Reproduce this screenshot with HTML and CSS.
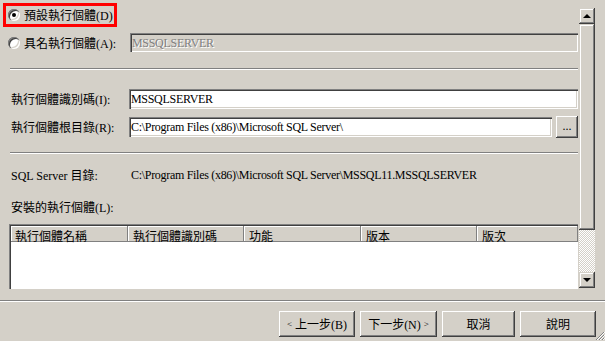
FILE: index.html
```html
<!DOCTYPE html>
<html lang="zh-Hant">

<head>
  <meta charset="UTF-8">
  <title>執行個體組態</title>
  <link rel="stylesheet" href="styles.css">
</head>

<body>
  <div class="pane">
    <div class="content">
      <div class="choice-default">
        <span class="radio checked"></span>
        <span>預設執行個體(D)</span>
      </div>

      <div class="row named">
        <span class="radio"></span>
        <span class="named-label">具名執行個體(A):</span>
        <div class="field disabled">MSSQLSERVER</div>
      </div>

      <div class="sep"></div>

      <div class="row id-row">
        <span class="label">執行個體識別碼(I):</span>
        <div class="field">MSSQLSERVER</div>
      </div>

      <div class="row root-row">
        <span class="label">執行個體根目錄(R):</span>
        <div class="field">C:\Program Files (x86)\Microsoft SQL Server\</div>
        <div class="btn browse">...</div>
      </div>

      <div class="sep sep-2"></div>

      <div class="row dir-row">
        <span class="label dir-label">SQL Server 目錄:</span>
        <span class="latin">C:\Program Files (x86)\Microsoft SQL Server\MSSQL11.MSSQLSERVER</span>
      </div>

      <div class="row installed">安裝的執行個體(L):</div>

      <div class="list">
        <div class="list-head">
          <div class="col c1">執行個體名稱</div>
          <div class="col c2">執行個體識別碼</div>
          <div class="col c3">功能</div>
          <div class="col c4">版本</div>
          <div class="col c5">版次</div>
        </div>
        <div class="list-body"></div>
      </div>
    </div>

    <div class="scrollbar">
      <div class="sb-btn"><span class="arrow up"></span></div>
      <div class="sb-thumb"></div>
      <div class="sb-track"></div>
      <div class="sb-btn"><span class="arrow down"></span></div>
    </div>
  </div>

  <div class="sep full"></div>

  <div class="buttons">
    <div class="btn nav b1"><span class="small">&lt;</span>&nbsp;上一步(B)</div>
    <div class="btn nav b2">下一步(N)&nbsp;<span class="small">&gt;</span></div>
    <div class="btn nav b3">取消</div>
    <div class="btn nav b4">說明</div>
  </div>

  <svg class="grip" width="10" height="10" viewBox="0 0 10 10">
    <path d="M9 1 L1 9 M9 4 L4 9 M9 7 L7 9" stroke="#808080" stroke-width="1" />
    <path d="M10 1 L2 9 M10 4 L5 9 M10 7 L8 9" stroke="#fff" stroke-width="1" />
  </svg>
</body>

</html>
```

FILE: styles.css
```css
body {
  margin: 0;
  width: 605px;
  height: 341px;
  overflow: hidden;
  position: relative;
  background: #d4d0c8;
  font-family: "Liberation Serif", "Noto Sans CJK TC", serif;
  font-size: 12px;
  color: #000;
}

.pane {
  display: flex;
  height: 289px;
  padding-right: 10px;
  overflow: hidden;
}

.content {
  flex: 1;
  padding: 3px 1px 0 0;
  display: flex;
  flex-direction: column;
}

.choice-default {
  box-sizing: border-box;
  width: 114px;
  height: 24px;
  margin-left: 3px;
  border: 3px solid #f00;
  padding-left: 2px;
  display: flex;
  align-items: center;
  gap: 4px;
}

.radio {
  position: relative;
  flex: none;
  width: 12px;
  height: 12px;
  border-radius: 50%;
  background: #fff;
  box-shadow: inset 1px 1px 0 #808080, inset 2px 2px 0 #404040,
    inset -1px -1px 0 #fff, inset -2px -2px 0 #d4d0c8;
}

.radio.checked::after {
  content: "";
  position: absolute;
  left: 4px;
  top: 4px;
  width: 4px;
  height: 4px;
  border-radius: 50%;
  background: #000;
}

.row {
  display: flex;
  align-items: center;
}

.named {
  margin-top: 6px;
  height: 19px;
  padding-left: 8px;
  gap: 4px;
}

.named-label {
  width: 102px;
}

.field {
  flex: 1;
  box-sizing: border-box;
  height: 20px;
  padding: 3px 2px 0;
  background: #fff;
  white-space: nowrap;
  overflow: hidden;
  letter-spacing: -0.3px;
  box-shadow: inset 1px 1px 0 #808080, inset 2px 2px 0 #404040,
    inset -1px -1px 0 #fff, inset -2px -2px 0 #d4d0c8;
}

.latin {
  letter-spacing: -0.3px;
  white-space: nowrap;
}

.named .field {
  height: 19px;
}

.field.disabled {
  background: #d4d0c8;
  color: #808080;
  text-shadow: 1px 1px 0 #fff;
}

.sep {
  height: 0;
  margin: 16px 0 0 10px;
  border-top: 1px solid #808080;
  border-bottom: 1px solid #fff;
}

.sep-2 {
  margin-top: 14px;
}

.label {
  width: 118px;
  flex: none;
  padding-left: 11px;
}

.id-row {
  margin-top: 19px;
  height: 20px;
}

.root-row {
  margin-top: 7px;
  height: 22px;
}

.btn {
  box-sizing: border-box;
  display: flex;
  align-items: center;
  justify-content: center;
  background: #d4d0c8;
  box-shadow: inset -1px -1px 0 #404040, inset 1px 1px 0 #fff,
    inset -2px -2px 0 #808080, inset 2px 2px 0 #d4d0c8;
}

.browse {
  width: 22px;
  height: 22px;
  flex: none;
  margin-left: 4px;
  padding-bottom: 2px;
}

.dir-row {
  margin-top: 14px;
  height: 14px;
}

.dir-label {
  width: 120px;
}

.installed {
  margin-top: 18px;
  height: 14px;
  padding-left: 11px;
}

.list {
  margin: 10px 0 0 9px;
  flex: none;
  height: 80px;
  background: #fff;
  padding: 2px 0 0 2px;
  box-shadow: inset 1px 1px 0 #808080, inset 2px 2px 0 #404040;
}

.list-head {
  display: flex;
  height: 16px;
}

.col {
  box-sizing: border-box;
  height: 16px;
  padding: 1px 0 0 5px;
  background: #d4d0c8;
  white-space: nowrap;
  box-shadow: inset -1px -1px 0 #808080, inset 1px 1px 0 #fff;
}

.c1 { width: 117px; padding-left: 4px; }
.c2 { width: 116px; }
.c3 { width: 117px; }
.c4 { width: 116px; }
.c5 { flex: 1; }

.scrollbar {
  width: 16px;
  margin-top: 8px;
  display: flex;
  flex-direction: column;
}

.sb-btn {
  height: 16px;
  display: flex;
  align-items: center;
  justify-content: center;
  background: #d4d0c8;
  box-shadow: inset -1px -1px 0 #404040, inset 1px 1px 0 #d4d0c8,
    inset -2px -2px 0 #808080, inset 2px 2px 0 #fff;
}

.sb-thumb {
  height: 206px;
  background: #d4d0c8;
  box-shadow: inset -1px -1px 0 #404040, inset 1px 1px 0 #d4d0c8,
    inset -2px -2px 0 #808080, inset 2px 2px 0 #fff;
}

.sb-track {
  height: 42px;
  background: repeating-conic-gradient(#fff 0 25%, #d4d0c8 0 50%) 0 0 / 2px 2px;
}

.arrow {
  width: 0;
  height: 0;
  border-left: 4px solid transparent;
  border-right: 4px solid transparent;
}

.arrow.up {
  border-bottom: 4px solid #000;
  margin-bottom: 1px;
}

.arrow.down {
  border-top: 4px solid #000;
}

.sep.full {
  margin: 11px 0 0 0;
}

.buttons {
  display: flex;
  justify-content: flex-end;
  gap: 5px;
  margin-top: 9px;
  padding-right: 9px;
}

.nav {
  height: 26px;
}

.b1 { width: 76px; }
.b2 { width: 77px; }
.b3 { width: 73px; }
.b4 { width: 76px; }

.small {
  font-size: 9px;
}

.grip {
  position: absolute;
  right: 0;
  bottom: 0;
}
```
